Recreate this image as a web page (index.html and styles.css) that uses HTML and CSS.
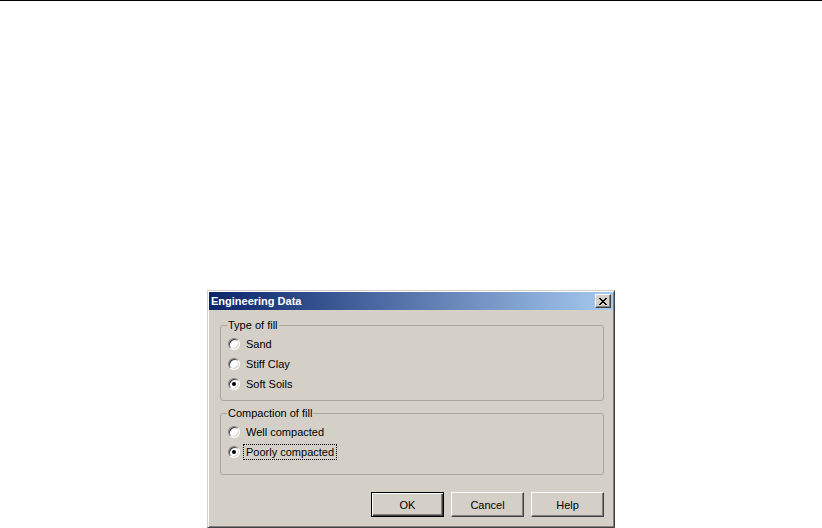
FILE: index.html
```html
<!DOCTYPE html>
<html lang="en">
<head>
  <meta charset="UTF-8">
  <meta name="viewport" content="width=device-width, initial-scale=1.0">
  <title>Engineering Data</title>
  <link rel="stylesheet" href="styles.css">
</head>
<body>
  <div class="rule"></div>

  <div class="dialog">
    <div class="titlebar">
      <span class="title">Engineering Data</span>
      <span class="close">
        <svg width="8" height="7" viewBox="0 0 8 7" shape-rendering="crispEdges">
          <path d="M0 0h2v1h-2zM6 0h2v1h-2zM1 1h2v1h-2zM5 1h2v1h-2zM2 2h4v1h-4zM3 3h2v1h-2zM2 4h4v1h-4zM1 5h2v1h-2zM5 5h2v1h-2zM0 6h2v1h-2zM6 6h2v1h-2z" fill="#000"/>
        </svg>
      </span>
    </div>

    <div class="content">
      <fieldset class="group group-fill">
        <legend>Type of fill</legend>
        <label class="radio"><span class="circle"></span>Sand</label>
        <label class="radio"><span class="circle"></span>Stiff Clay</label>
        <label class="radio"><span class="circle checked"></span>Soft Soils</label>
      </fieldset>

      <fieldset class="group group-compaction">
        <legend>Compaction of fill</legend>
        <label class="radio"><span class="circle"></span>Well compacted</label>
        <label class="radio"><span class="circle checked"></span><span class="focus">Poorly compacted</span></label>
      </fieldset>

      <div class="buttons">
        <button class="btn default">OK</button>
        <button class="btn">Cancel</button>
        <button class="btn">Help</button>
      </div>
    </div>
  </div>
</body>
</html>
```

FILE: styles.css
```css
body {
  margin: 0;
  background: #fff;
  font-family: "Liberation Sans", Arial, sans-serif;
  font-size: 11px;
  color: #000;
}
.rule {
  height: 1px;
  background: #000;
}
.dialog {
  width: 408px;
  height: 238px;
  box-sizing: border-box;
  margin: 289px auto 0;
  padding: 1px;
  background: #d4d0c8;
  border: 1px solid;
  border-color: #d4d0c8 #404040 #404040 #d4d0c8;
  box-shadow: inset 1px 1px #fff, inset -1px -1px #808080;
}
.titlebar {
  height: 18px;
  display: flex;
  align-items: center;
  justify-content: space-between;
  padding: 0 2px 0 2px;
  background: linear-gradient(to right, #0a246a, #a6caf0);
}
.title {
  color: #fff;
  font-weight: bold;
}
.close {
  width: 16px;
  height: 14px;
  box-sizing: border-box;
  display: flex;
  align-items: center;
  justify-content: center;
  background: #d4d0c8;
  border: 1px solid;
  border-color: #fff #404040 #404040 #fff;
  box-shadow: inset -1px -1px #808080;
}
.content {
  padding: 9px 9px 0 11px;
}
.group {
  margin: 0;
  padding: 2px 7px 6px;
  border: 1px solid #a9a69f;
  border-radius: 3px;
}
.group legend {
  padding: 0 1px;
  margin-left: -1px;
  line-height: 13px;
}
.group-compaction {
  margin-top: 6px;
  padding-bottom: 12px;
}
.radio {
  display: flex;
  align-items: center;
  height: 20px;
}
.circle {
  width: 12px;
  height: 12px;
  box-sizing: border-box;
  margin-right: 6px;
  border-radius: 50%;
  background: #fff;
  border: 1px solid;
  border-color: #808080 #fff #fff #808080;
  box-shadow: inset 1px 1px #404040, inset -1px -1px #d4d0c8;
  display: flex;
  align-items: center;
  justify-content: center;
}
.circle.checked::after {
  content: "";
  width: 4px;
  height: 4px;
  border-radius: 50%;
  background: #000;
}
.focus {
  border: 1px dotted #000;
  padding: 0 2px;
  margin-left: -3px;
  line-height: 14px;
}
.buttons {
  display: flex;
  justify-content: flex-end;
  gap: 7px;
  margin-top: 17px;
}
.btn {
  width: 73px;
  height: 25px;
  box-sizing: border-box;
  padding: 0;
  font: inherit;
  color: #000;
  background: #d4d0c8;
  border: 1px solid;
  border-color: #fff #404040 #404040 #fff;
  box-shadow: inset -1px -1px #808080, inset 1px 1px #d4d0c8;
}
.btn.default {
  border-color: #000;
  box-shadow: inset 1px 1px #fff, inset -1px -1px #404040, inset -2px -2px #808080;
}
```
